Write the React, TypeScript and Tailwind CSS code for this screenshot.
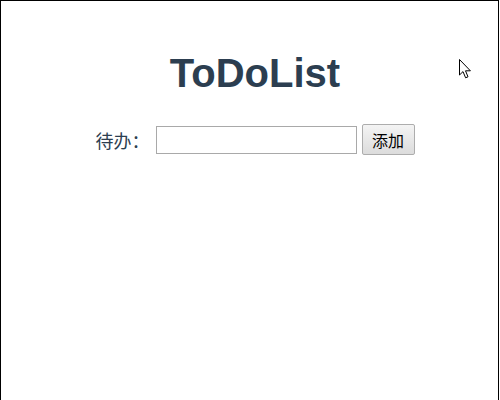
import React from 'react';

const Cursor: React.FC = () => (
  <svg
    className="absolute left-[457px] top-[57px]"
    width="14"
    height="22"
    viewBox="0 0 14 22"
  >
    <path
      d="M1.5 1.5 L1.5 17 L5 13.6 L7.6 19.8 L10 18.8 L7.5 12.8 L12.4 12.8 Z"
      fill="#fff"
      stroke="#000"
      strokeWidth="1"
      strokeLinejoin="miter"
    />
  </svg>
);

const App: React.FC = () => {
  return (
    <div className="relative w-[499px] h-[420px] border-t border-l border-r border-black bg-white overflow-hidden">
      <div
        className="flex flex-col items-center pl-[11px] pt-[49px] text-[#2c3e50]"
        style={{ fontFamily: '"Liberation Sans", Arial, "Noto Sans CJK SC", sans-serif' }}
      >
        <h1 className="text-[40px] leading-[46px] font-bold">ToDoList</h1>
        <div className="mt-[28px] flex items-center">
          <label className="text-[18px] leading-[24px] text-[#2c3e50]" style={{ fontFamily: '"Noto Sans CJK SC", sans-serif' }}>
            待办：
          </label>
          <input
            type="text"
            className="ml-[6px] w-[201px] h-[28px] border border-[#a9a9a9] bg-white outline-none"
          />
          <button
            className="ml-[5px] w-[53px] h-[31px] border border-[#adadad] rounded-[2px] bg-gradient-to-b from-[#f4f4f4] to-[#dcdcdc] text-[16px] text-black leading-none"
            style={{ fontFamily: '"Noto Sans CJK SC", sans-serif' }}
          >
            添加
          </button>
        </div>
      </div>
      <Cursor />
    </div>
  );
};

export default App;
